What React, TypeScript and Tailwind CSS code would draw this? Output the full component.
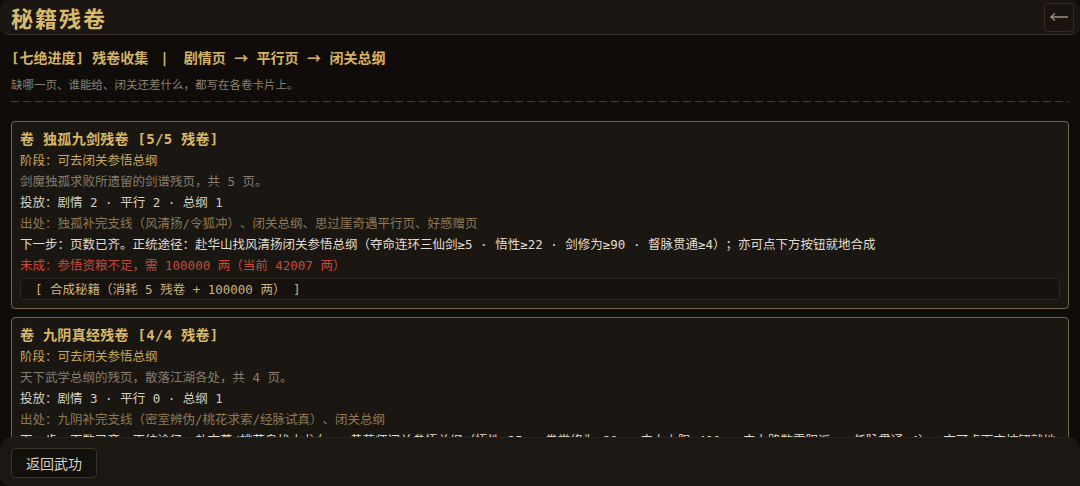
import React from "react";

type Scroll = {
  name: string;
  count: string;
  stage: string;
  desc: string;
  drops: string;
  source: string;
  next: string;
  missing?: string;
  action: string;
};

const scrolls: Scroll[] = [
  {
    name: "独孤九剑残卷",
    count: "5/5 残卷",
    stage: "阶段：可去闭关参悟总纲",
    desc: "剑魔独孤求败所遗留的剑谱残页，共 5 页。",
    drops: "投放：剧情 2 · 平行 2 · 总纲 1",
    source: "出处：独孤补完支线（风清扬/令狐冲）、闭关总纲、思过崖奇遇平行页、好感赠页",
    next: "下一步：页数已齐。正统途径：赴华山找风清扬闭关参悟总纲（夺命连环三仙剑≥5 · 悟性≥22 · 剑修为≥90 · 督脉贯通≥4）；亦可点下方按钮就地合成",
    missing: "未成：参悟资粮不足，需 100000 两（当前 42007 两）",
    action: "[ 合成秘籍（消耗 5 残卷 + 100000 两） ]",
  },
  {
    name: "九阴真经残卷",
    count: "4/4 残卷",
    stage: "阶段：可去闭关参悟总纲",
    desc: "天下武学总纲的残页，散落江湖各处，共 4 页。",
    drops: "投放：剧情 3 · 平行 0 · 总纲 1",
    source: "出处：九阴补完支线（密室辨伪/桃花求索/经脉试真）、闭关总纲",
    next: "下一步：页数已齐。正统途径：赴古墓/桃花岛找小龙女 · 黄药师闭关参悟总纲（悟性≥25 · 拳掌修为≥90 · 内力上限≥400 · 内力路数需阴派 · 任脉贯通≥4）；亦可点下方按钮就地合成",
    missing: "未成：参悟资粮不足，需 100000 两（当前 42007 两）",
    action: "[ 合成秘籍（消耗 4 残卷 + 100000 两） ]",
  },
];

function ScrollCard({ s }: { s: Scroll }) {
  return (
    <div className="rounded-[4px] border border-[#75664c] bg-[#1a1713] px-[8px] pt-[7px] pb-[8px] text-[12.5px] leading-[21px]">
      <div className="text-[14px] font-bold tracking-[0.3px] text-[#d9b769]">
        卷 {s.name} [{s.count}]
      </div>
      <div className="text-[#c8a75e]">{s.stage}</div>
      <div className="text-[#857d70]">{s.desc}</div>
      <div className="text-[#d5cfc2]">{s.drops}</div>
      <div className="text-[#8c7a55]">{s.source}</div>
      <div className="text-[#e2dccf]">{s.next}</div>
      {s.missing && <div className="text-[#c44a3a]">{s.missing}</div>}
      <button
        type="button"
        className="mt-[2px] flex h-[22px] w-full items-center rounded-[3px] border border-[#2c261e] bg-[#16130f] px-[14px] text-left text-[12.5px] text-[#c9b27c]"
      >
        {s.action}
      </button>
    </div>
  );
}

export default function App() {
  return (
    <div className="flex h-[486px] w-[1080px] flex-col overflow-hidden bg-[#0f0c09] font-['DejaVu_Sans_Mono','Noto_Sans_CJK_SC',monospace] [text-spacing-trim:space-all]">
      <header className="flex h-[35px] shrink-0 items-center justify-between rounded-[10px] border-b border-[#3b3226] bg-[#1b1611] pl-[11px] pr-[6px]">
        <h1 className="font-['Noto_Sans_CJK_SC',sans-serif] text-[22px] font-bold tracking-[2px] text-[#d8bb6a]">
          秘籍残卷
        </h1>
        <button
          type="button"
          aria-label="返回"
          className="grid h-[29px] w-[30px] place-items-center rounded-[4px] border border-[#332c23] bg-[#1a1410]"
        >
          <svg width="20" height="10" viewBox="0 0 20 10" fill="none" stroke="#9a8f80" strokeWidth="1.4">
            <path d="M2 5h17M6 1.5L2 5l4 3.5" />
          </svg>
        </button>
      </header>

      <main className="min-h-0 flex-1 overflow-hidden px-[11px] pt-[12px]">
        <div className="text-[14px] font-bold leading-[20px] text-[#d4b366]">
          [七绝进度] 残卷收集<span className="ml-[12px] mr-[15px]">|</span>剧情页{" "}
          <span className="font-['Noto_Sans_CJK_SC']">→</span> 平行页{" "}
          <span className="font-['Noto_Sans_CJK_SC']">→</span> 闭关总纲
        </div>
        <div className="mt-[9px] text-[11.5px] leading-[16px] text-[#8a8272]">
          缺哪一页、谁能给、闭关还差什么，都写在各卷卡片上。
        </div>
        <div className="mt-[8px] h-px bg-[repeating-linear-gradient(90deg,#4a4236_0_8px,transparent_8px_12px)]" />

        <div className="mt-[19px] flex flex-col gap-[8px]">
          {scrolls.map((s) => (
            <ScrollCard key={s.name} s={s} />
          ))}
        </div>
      </main>

      <footer className="flex h-[49px] shrink-0 items-start rounded-t-[14px] rounded-bl-[10px] border-t border-[#2a241c] bg-[#1b1712] px-[11px] pt-[10px]">
        <button
          type="button"
          className="h-[30px] w-[86px] rounded-[4px] border border-[#3a3328] bg-[#14110d] font-['Noto_Sans_CJK_SC',sans-serif] text-[14px] text-[#d8d0c0]"
        >
          返回武功
        </button>
      </footer>
    </div>
  );
}
